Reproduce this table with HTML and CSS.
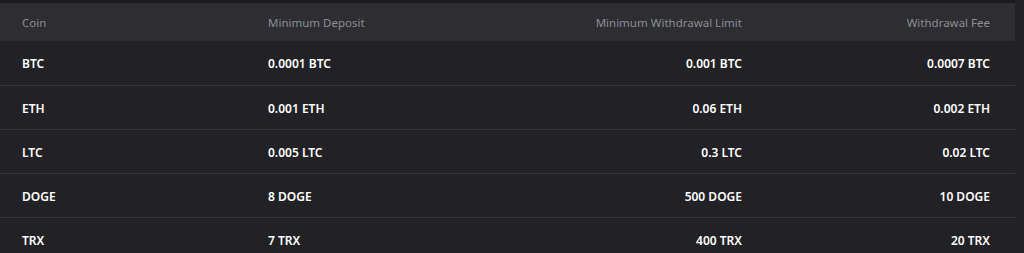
FILE: index.html
```html
<!DOCTYPE html>
<html lang="en">
<head>
    <meta charset="UTF-8">
    <title>Deposit and Withdrawal Limits</title>
    <link rel="stylesheet" href="styles.css">
</head>
<body>
    <div class="page">
        <table class="limits">
            <thead>
                <tr>
                    <th class="col-coin">Coin</th>
                    <th class="col-deposit">Minimum Deposit</th>
                    <th class="col-limit num">Minimum Withdrawal Limit</th>
                    <th class="col-fee num">Withdrawal Fee</th>
                </tr>
            </thead>
            <tbody>
                <tr>
                    <td>BTC</td>
                    <td>0.0001 BTC</td>
                    <td class="num">0.001 BTC</td>
                    <td class="num">0.0007 BTC</td>
                </tr>
                <tr>
                    <td>ETH</td>
                    <td>0.001 ETH</td>
                    <td class="num">0.06 ETH</td>
                    <td class="num">0.002 ETH</td>
                </tr>
                <tr>
                    <td>LTC</td>
                    <td>0.005 LTC</td>
                    <td class="num">0.3 LTC</td>
                    <td class="num">0.02 LTC</td>
                </tr>
                <tr>
                    <td>DOGE</td>
                    <td>8 DOGE</td>
                    <td class="num">500 DOGE</td>
                    <td class="num">10 DOGE</td>
                </tr>
                <tr>
                    <td>TRX</td>
                    <td>7 TRX</td>
                    <td class="num">400 TRX</td>
                    <td class="num">20 TRX</td>
                </tr>
            </tbody>
        </table>
    </div>
</body>
</html>
```

FILE: styles.css
```css
* {
    margin: 0;
    padding: 0;
    box-sizing: border-box;
}

body {
    background-color: #222226;
    color: #ffffff;
    font-family: 'Noto Sans', 'Open Sans', sans-serif;
    font-size: 12px;
    height: 253px;
    overflow: hidden;
}

.page {
    border-top: 3px solid #1b1b1f;
    width: 1015px;
}

.limits {
    width: 100%;
    border-collapse: collapse;
    table-layout: fixed;
}

.limits th {
    background-color: #2d2d32;
    color: #8b8e95;
    font-size: 11.5px;
    font-weight: 400;
    height: 38px;
    text-align: left;
    padding: 1px 22px 0;
}

.limits td {
    height: 44px;
    padding: 2px 22px 0;
    font-weight: 600;
    border-bottom: 1px solid #35353a;
}

.limits .num {
    text-align: right;
    padding-right: 25px;
}

.col-coin {
    width: 246px;
}

.col-deposit {
    width: 275px;
}

.col-limit {
    width: 246px;
}
```
